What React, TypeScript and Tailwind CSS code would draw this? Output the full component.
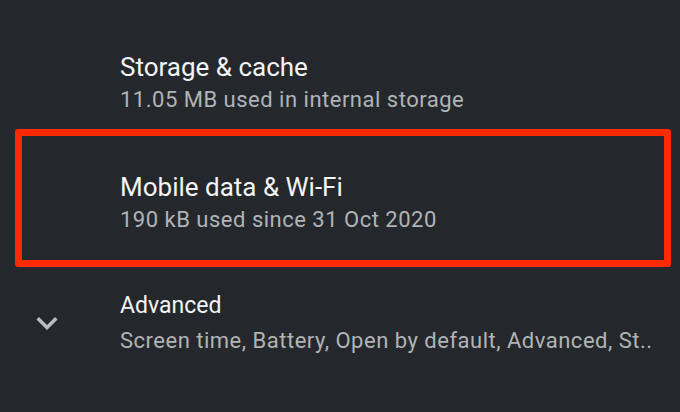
import React from "react";

const font = { fontFamily: "Roboto, 'Noto Sans', sans-serif" };

export default function App() {
  return (
    <div
      className="relative w-[680px] h-[412px] overflow-hidden bg-[#24282c] pt-[51px]"
      style={font}
    >
      <div className="pl-[120px]">
        <div className="text-[26px] leading-[32px] text-[#f4f4f4]">Storage &amp; cache</div>
        <div className="mt-[2px] text-[22px] leading-[30px] tracking-[0.5px] text-[#b1b4b6]">
          11.05 MB used in internal storage
        </div>
      </div>

      <div className="pl-[120px] mt-[56px]">
        <div className="text-[26px] leading-[32px] text-[#f4f4f4]">Mobile data &amp; Wi-Fi</div>
        <div className="mt-[2px] text-[22px] leading-[30px] tracking-[0.5px] text-[#b1b4b6]">
          190 kB used since 31 Oct 2020
        </div>
      </div>

      <div className="flex items-center mt-[55px]">
        <div className="w-[120px] flex items-center pl-[26px]">
          <svg width="42" height="42" viewBox="0 0 24 24" fill="#b9bbbd">
            <path d="M16.59 8.59L12 13.17 7.41 8.59 6 10l6 6 6-6z" />
          </svg>
        </div>
        <div>
          <div className="text-[23px] leading-[32px] text-[#f4f4f4]">Advanced</div>
          <div className="mt-[4px] text-[22px] leading-[30px] tracking-[0.5px] text-[#b1b4b6] whitespace-nowrap">
            Screen time, Battery, Open by default, Advanced, St..
          </div>
        </div>
      </div>

      <div className="absolute left-[15px] top-[129px] w-[656px] h-[138px] border-[7px] border-[#ff2a00] rounded-[3px]" />
    </div>
  );
}
